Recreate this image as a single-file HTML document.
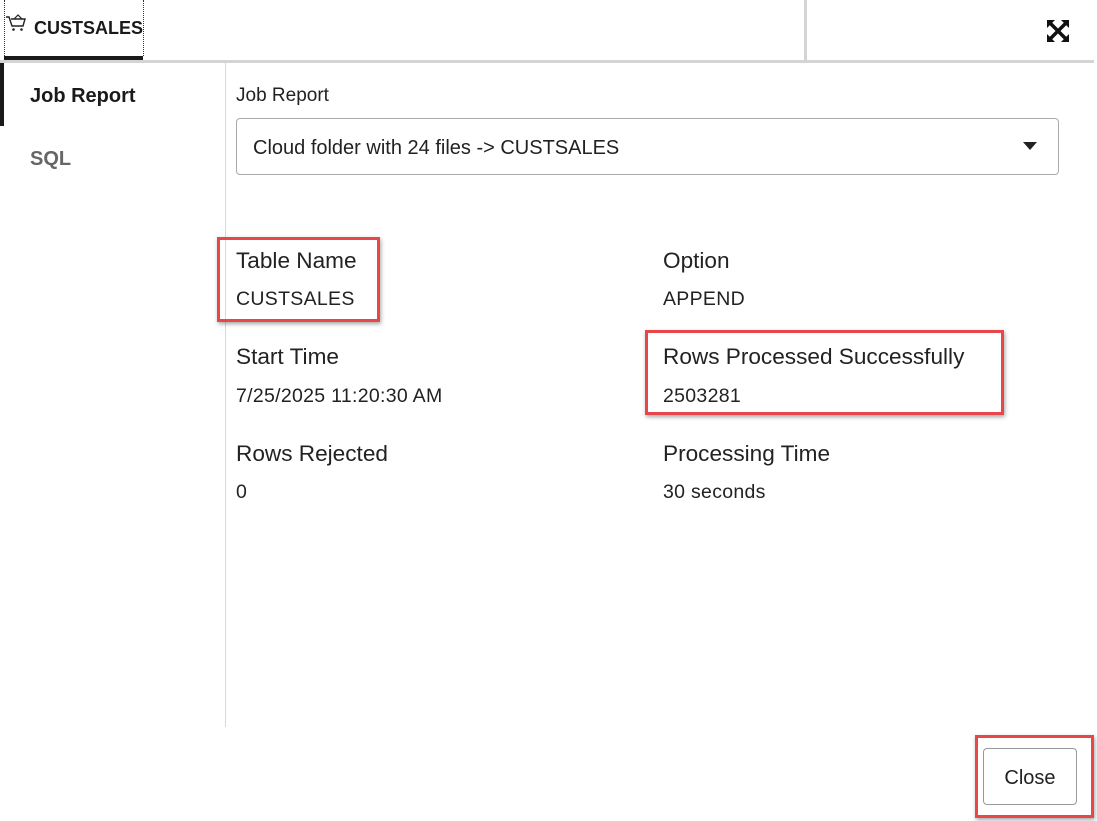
<!DOCTYPE html>
<html><head><style>
body{margin:0;width:1097px;height:821px;background:#fff;font-family:"Segoe UI","Liberation Sans",sans-serif;color:#222;position:relative;overflow:hidden}
.a{position:absolute;white-space:nowrap}
.lbl{font-size:22.6px;color:#222}
.val{font-size:19.5px;color:#222;letter-spacing:0.3px}
.red{position:absolute;border:3px solid #e8474a;box-shadow:1px 2px 4px rgba(0,0,0,.35)}
</style></head><body>
<div class="a" style="left:4px;top:0;width:138px;height:56px;border-left:1px dotted #333;border-right:1px dotted #333"></div>
<div class="a" style="left:4px;top:56px;width:139px;height:4px;background:#1a1a1a"></div>
<svg class="a" style="left:6px;top:14px" width="22" height="20" viewBox="0 0 22 20"><path d="M0 3h3l3 9h11l2-7H5" fill="none" stroke="#222" stroke-width="1.4"/><path d="M8 5l4-4 4 4" fill="none" stroke="#222" stroke-width="1.2"/><circle cx="7.5" cy="15.5" r="1.3" fill="#222"/><circle cx="15.5" cy="15.5" r="1.3" fill="#222"/></svg>
<div class="a" style="left:34px;top:18px;font-size:18px;font-weight:600;color:#1a1a1a">CUSTSALES</div>
<div class="a" style="left:804px;top:0;width:3px;height:60px;background:#d4d4d4"></div>
<div class="a" style="left:0;top:60px;width:1094px;height:3px;background:#d4d4d4"></div>
<svg class="a" style="left:1047px;top:20px" width="22" height="22" viewBox="0 0 22 22"><g stroke="#111" stroke-width="3.5" stroke-linecap="square"><path d="M5 5L17 17M17 5L5 17"/></g><g fill="#111"><path d="M0 0h8L0 8z"/><path d="M22 0h-8l8 8z"/><path d="M0 22h8L0 14z"/><path d="M22 22h-8l8-8z"/></g></svg>
<div class="a" style="left:0;top:63px;width:4px;height:63px;background:#1a1a1a"></div>
<div class="a" style="left:30px;top:85px;font-size:20px;font-weight:600;color:#1a1a1a">Job Report</div>
<div class="a" style="left:30px;top:148px;font-size:20px;font-weight:600;color:#666">SQL</div>
<div class="a" style="left:225px;top:63px;width:1px;height:664px;background:#d8d8d8"></div>
<div class="a" style="left:236px;top:85px;font-size:19px">Job Report</div>
<div class="a" style="left:236px;top:118px;width:823px;height:57px;border:1px solid #aaa;border-radius:4px;box-sizing:border-box"></div>
<div class="a" style="left:253px;top:137px;font-size:20px">Cloud folder with 24 files -&gt; CUSTSALES</div>
<svg class="a" style="left:1023px;top:142px" width="14" height="8"><path d="M0 0h14L7 8z" fill="#222"/></svg>
<div class="a lbl" style="left:236px;top:248px">Table Name</div>
<div class="a val" style="left:236px;top:288px">CUSTSALES</div>
<div class="a lbl" style="left:663px;top:248px">Option</div>
<div class="a val" style="left:663px;top:288px">APPEND</div>
<div class="a lbl" style="left:236px;top:344px">Start Time</div>
<div class="a val" style="left:236px;top:385px">7/25/2025 11:20:30 AM</div>
<div class="a lbl" style="left:663px;top:344px">Rows Processed Successfully</div>
<div class="a val" style="left:663px;top:385px">2503281</div>
<div class="a lbl" style="left:236px;top:441px">Rows Rejected</div>
<div class="a val" style="left:236px;top:481px">0</div>
<div class="a lbl" style="left:663px;top:441px">Processing Time</div>
<div class="a val" style="left:663px;top:481px">30 seconds</div>
<div class="a" style="left:983px;top:748px;width:94px;height:57px;border:1px solid #999;border-radius:4px;box-sizing:border-box;font-size:20px;text-align:center;line-height:58px">Close</div>
<div class="red" style="left:217px;top:237px;width:157px;height:79px"></div>
<div class="red" style="left:645px;top:330px;width:353px;height:79px"></div>
<div class="red" style="left:975px;top:735px;width:113px;height:77px"></div>
</body></html>
